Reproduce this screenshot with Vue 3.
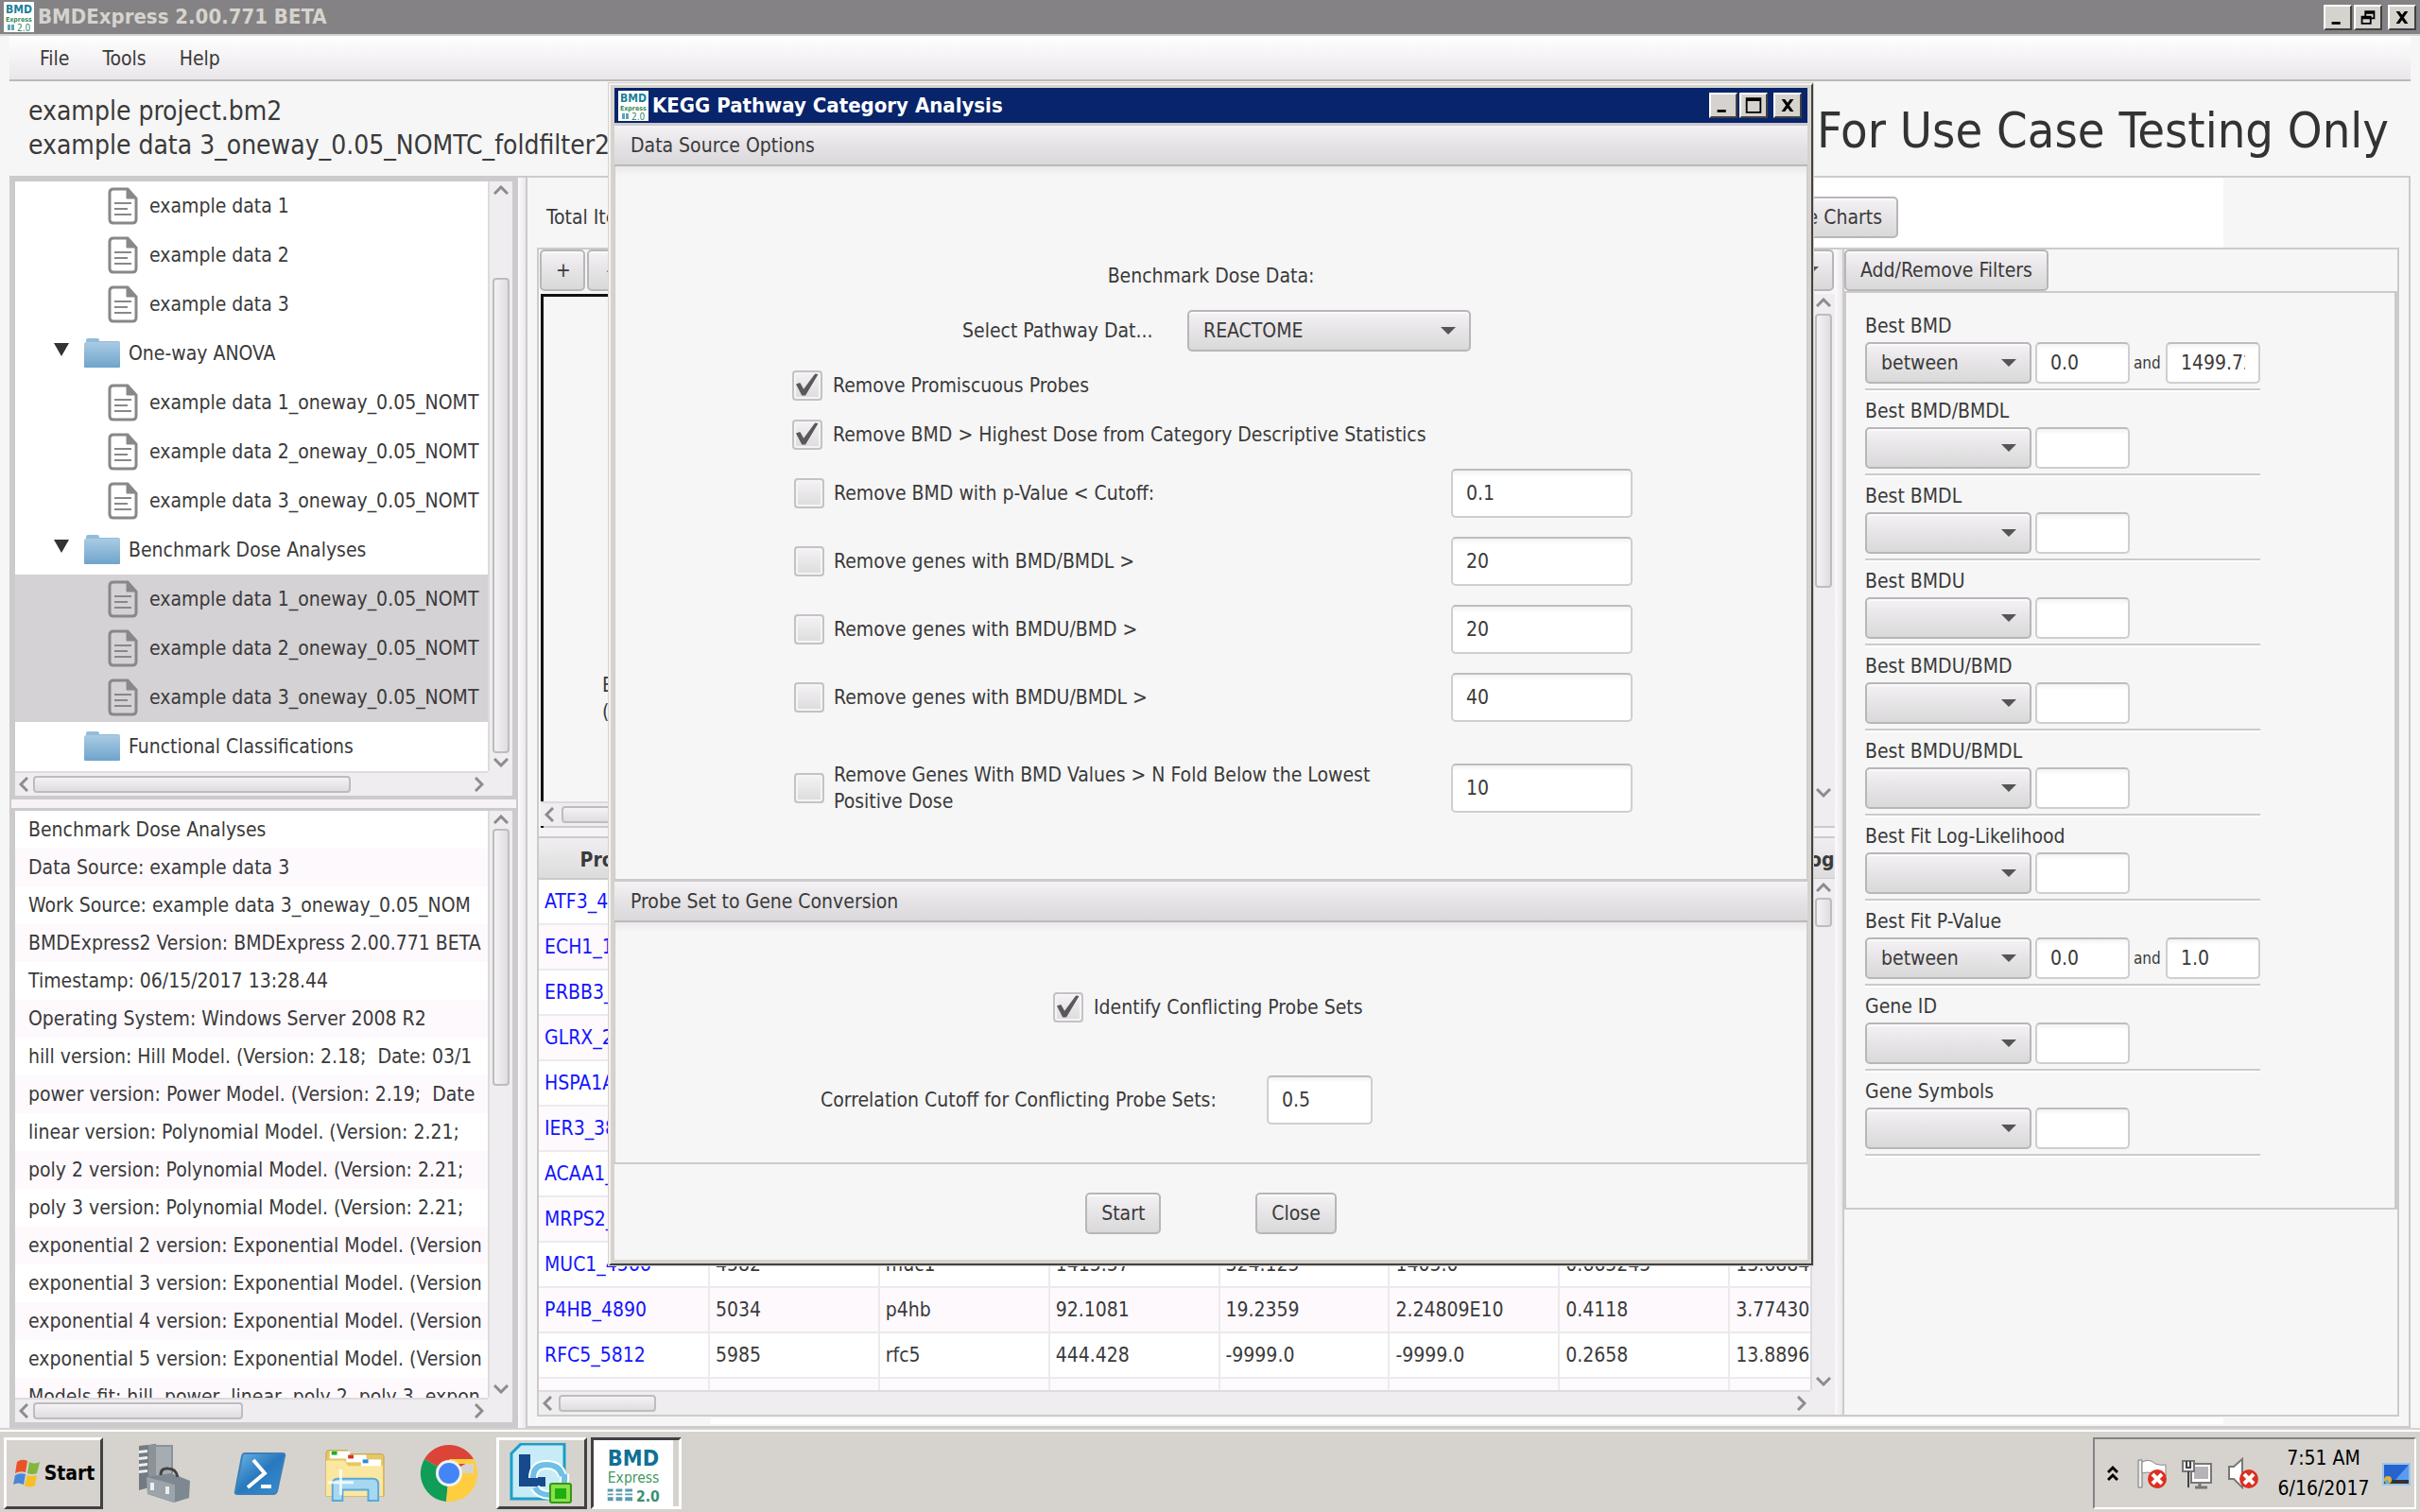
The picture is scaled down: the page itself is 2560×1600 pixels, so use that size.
<script setup>
const projectName = 'example project.bm2'
const dataName = 'example data 3_oneway_0.05_NOMTC_foldfilter2_'

const tree = [
  { kind: 'file', label: 'example data 1' },
  { kind: 'file', label: 'example data 2' },
  { kind: 'file', label: 'example data 3' },
  { kind: 'folder', label: 'One-way ANOVA', open: true },
  { kind: 'file', label: 'example data 1_oneway_0.05_NOMT' },
  { kind: 'file', label: 'example data 2_oneway_0.05_NOMT' },
  { kind: 'file', label: 'example data 3_oneway_0.05_NOMT' },
  { kind: 'folder', label: 'Benchmark Dose Analyses', open: true },
  { kind: 'file', label: 'example data 1_oneway_0.05_NOMT', selected: true },
  { kind: 'file', label: 'example data 2_oneway_0.05_NOMT', selected: true },
  { kind: 'file', label: 'example data 3_oneway_0.05_NOMT', selected: true },
  { kind: 'folder', label: 'Functional Classifications' },
]

const info = [
  'Benchmark Dose Analyses',
  'Data Source: example data 3',
  'Work Source: example data 3_oneway_0.05_NOM',
  'BMDExpress2 Version: BMDExpress 2.00.771 BETA',
  'Timestamp: 06/15/2017 13:28.44',
  'Operating System: Windows Server 2008 R2',
  'hill version: Hill Model. (Version: 2.18;  Date: 03/1',
  'power version: Power Model. (Version: 2.19;  Date',
  'linear version: Polynomial Model. (Version: 2.21;',
  'poly 2 version: Polynomial Model. (Version: 2.21;',
  'poly 3 version: Polynomial Model. (Version: 2.21;',
  'exponential 2 version: Exponential Model. (Version',
  'exponential 3 version: Exponential Model. (Version',
  'exponential 4 version: Exponential Model. (Version',
  'exponential 5 version: Exponential Model. (Version',
  'Models fit: hill, power, linear, poly 2, poly 3, expon',
]

const columns = ['Probe ID', 'Gene IDs', 'Gene Symbols', 'Best BMD', 'Best BMDL', 'Best BMDU', 'Best P-Value', 'Best Log Like']
const rows = [
  ['ATF3_467', '', '', '', '', '', '', ''],
  ['ECH1_1891', '', '', '', '', '', '', ''],
  ['ERBB3_2065', '', '', '', '', '', '', ''],
  ['GLRX_2745', '', '', '', '', '', '', ''],
  ['HSPA1A_33', '', '', '', '', '', '', ''],
  ['IER3_3870', '', '', '', '', '', '', ''],
  ['ACAA1_30', '', '', '', '', '', '', ''],
  ['MRPS2_516', '', '', '', '', '', '', ''],
  ['MUC1_4566', '4582', 'muc1', '1415.57', '324.125', '1405.0', '0.665245', '13.6884'],
  ['P4HB_4890', '5034', 'p4hb', '92.1081', '19.2359', '2.24809E10', '0.4118', '3.77430'],
  ['RFC5_5812', '5985', 'rfc5', '444.428', '-9999.0', '-9999.0', '0.2658', '13.8896'],
  ['', '', '', '', '', '', '', ''],
]

const filters = [
  { label: 'Best BMD', op: 'between', from: '0.0', to: '1499.72' },
  { label: 'Best BMD/BMDL' },
  { label: 'Best BMDL' },
  { label: 'Best BMDU' },
  { label: 'Best BMDU/BMD' },
  { label: 'Best BMDU/BMDL' },
  { label: 'Best Fit Log-Likelihood' },
  { label: 'Best Fit P-Value', op: 'between', from: '0.0', to: '1.0' },
  { label: 'Gene ID' },
  { label: 'Gene Symbols' },
]

const cutoffs = [
  { label: 'Remove BMD with p-Value < Cutoff:', value: '0.1' },
  { label: 'Remove genes with BMD/BMDL >', value: '20' },
  { label: 'Remove genes with BMDU/BMD >', value: '20' },
  { label: 'Remove genes with BMDU/BMDL >', value: '40' },
  { label: 'Remove Genes With BMD Values > N Fold Below the Lowest Positive Dose', value: '10', tall: true },
]

// Scroll thumb placement: space before, thumb and space after, as shares of the track.
const rowsOf = (a, b, c) => ({ gridTemplateRows: `${a}fr ${b}fr ${c}fr` })
const colsOf = (a, b, c) => ({ gridTemplateColumns: `${a}fr ${b}fr ${c}fr` })
</script>

<template>
  <div class="desktop">
    <header class="titlebar">
      <svg class="app-icon" viewBox="0 0 32 32"><rect width="32" height="32" fill="#fff" /><text x="2" y="12" font-size="12" font-weight="700" fill="#1a7f9c">BMD</text><text x="2" y="21" font-size="7" font-weight="700" fill="#3a8a5a">Express</text><path d="M4 24h3v6H4zM8 24h3v6H8z" fill="#5aa5b5" /><text x="14" y="31" font-size="10" fill="#2f8a6a">2.0</text></svg>
      <h1>BMDExpress 2.00.771 BETA</h1>
      <div class="win-buttons">
        <button aria-label="Minimize"><svg viewBox="0 0 24 20"><path d="M5 15h10v3H5z" /></svg></button>
        <button aria-label="Restore"><svg viewBox="0 0 24 20"><path d="M8 2h12v10h-4v6H4V8h4zM10 6v2h6v2h2V6zM6 12v4h8v-4z" fill-rule="evenodd" /></svg></button>
        <button class="apart" aria-label="Close"><svg viewBox="0 0 24 20"><path d="M5 3h4l3 4 3-4h4l-5 7 5 7h-4l-3-4-3 4H5l5-7z" /></svg></button>
      </div>
    </header>

    <nav class="menubar">
      <button>File</button>
      <button>Tools</button>
      <button>Help</button>
    </nav>

    <section class="heading">
      <div class="names">
        <p>{{ projectName }}</p>
        <p>{{ dataName }}</p>
      </div>
      <p class="notice">For Use Case Testing Only</p>
    </section>

    <main class="workspace">
      <aside class="left">
        <div class="pane tree">
          <ul class="scroll-body">
            <li v-for="(n, i) in tree" :key="i" :class="[n.kind, { selected: n.selected }]">
              <span class="arrow"><svg v-if="n.open" viewBox="0 0 16 14"><path d="M0 0h16L8 14z" fill="#333" /></svg></span>
              <svg v-if="n.kind === 'folder'" class="folder-icon" viewBox="0 0 40 32">
                <defs><linearGradient id="fold" x1="0" y1="0" x2="0" y2="1"><stop offset="0" stop-color="#a9cbe4" /><stop offset="1" stop-color="#6fa4cb" /></linearGradient></defs>
                <path d="M3 6V2q0-2 2-2h10q2 0 2 2v1h20q2 0 2 2v2z" fill="#94bcd9" />
                <path d="M1 6q0-2 2-2h34q2 0 2 2v24q0 1-1 1H2q-1 0-1-1z" fill="url(#fold)" />
              </svg>
              <svg v-else class="file-icon" viewBox="0 0 32 40"><path d="M6 2h15l9 10v22q0 4-4 4H6q-4 0-4-4V6q0-4 4-4z" fill="none" stroke="#888" stroke-width="3" /><path d="M20 2l10 10H20z" fill="#888" stroke="#888" /><path d="M7 17h18M7 23h14M7 29h18" stroke="#888" stroke-width="2" /></svg>
              <span class="text">{{ n.label }}</span>
            </li>
          </ul>
          <div class="vbar"><svg viewBox="0 0 16 10"><path d="M1 9l7-7 7 7" /></svg><div class="track" :style="rowsOf(83, 497, 1)"><i></i></div><svg viewBox="0 0 16 10"><path d="M1 1l7 7 7-7" /></svg></div>
          <div class="hbar"><svg viewBox="0 0 10 16"><path d="M9 1L2 8l7 7" /></svg><div class="track" :style="colsOf(1, 333, 126)"><i></i></div><svg viewBox="0 0 10 16"><path d="M1 1l7 7-7 7" /></svg></div>
          <div class="corner"></div>
        </div>
        <div class="split-h"></div>
        <div class="pane info">
          <ul class="scroll-body">
            <li v-for="(t, i) in info" :key="i">{{ t }}</li>
          </ul>
          <div class="vbar"><svg viewBox="0 0 16 10"><path d="M1 9l7-7 7 7" /></svg><div class="track" :style="rowsOf(1, 268, 308)"><i></i></div><svg viewBox="0 0 16 10"><path d="M1 1l7 7 7-7" /></svg></div>
          <div class="hbar"><svg viewBox="0 0 10 16"><path d="M9 1L2 8l7 7" /></svg><div class="track" :style="colsOf(1, 219, 238)"><i></i></div><svg viewBox="0 0 10 16"><path d="M1 1l7 7-7 7" /></svg></div>
          <div class="corner"></div>
        </div>
      </aside>

      <div class="split-v"></div>

      <section class="detail">
        <div class="topbar">
          <span class="total">Total Items</span>
          <div class="sheet"><button class="btn">Hide Charts</button></div>
        </div>

        <div class="columns">
          <div class="center">
            <div class="chart-tools">
              <button class="btn">+</button>
              <button class="btn">-</button>
              <span class="drop"><select class="btn" aria-label="Chart view"><option></option></select></span>
            </div>
            <div class="pane chart">
              <div class="scroll-body canvas"><p>BMD<br>(all)</p></div>
              <div class="vbar"><svg viewBox="0 0 16 10"><path d="M1 9l7-7 7 7" /></svg><div class="track" :style="rowsOf(3, 287, 206)"><i></i></div><svg viewBox="0 0 16 10"><path d="M1 1l7 7 7-7" /></svg></div>
              <div class="hbar"><svg viewBox="0 0 10 16"><path d="M9 1L2 8l7 7" /></svg><div class="track" :style="colsOf(4, 900, 390)"><i></i></div><svg viewBox="0 0 10 16"><path d="M1 1l7 7-7 7" /></svg></div>
              <div class="corner"></div>
            </div>
            <div class="split-h"></div>
            <div class="pane grid">
              <div class="scroll-body">
                <table>
                  <thead><tr><th v-for="c in columns" :key="c">{{ c }}</th></tr></thead>
                  <tbody>
                    <tr v-for="(r, i) in rows" :key="i">
                      <td v-for="(c, j) in r" :key="j"><a v-if="j === 0 && c" href="#">{{ c }}</a><template v-else>{{ c }}</template></td>
                    </tr>
                  </tbody>
                </table>
              </div>
              <div class="vbar"><svg viewBox="0 0 16 10"><path d="M1 9l7-7 7 7" /></svg><div class="track" :style="rowsOf(2, 31, 468)"><i></i></div><svg viewBox="0 0 16 10"><path d="M1 1l7 7 7-7" /></svg></div>
              <div class="hbar"><svg viewBox="0 0 10 16"><path d="M9 1L2 8l7 7" /></svg><div class="track" :style="colsOf(3, 102, 1196)"><i></i></div><svg viewBox="0 0 10 16"><path d="M1 1l7 7-7 7" /></svg></div>
              <div class="corner"></div>
            </div>
          </div>

          <div class="split-v"></div>

          <aside class="filters">
            <button class="btn">Add/Remove Filters</button>
            <div class="filter-list">
              <div v-for="(f, i) in filters" :key="f.label" class="filter">
                <label :for="'f' + i">{{ f.label }}</label>
                <div class="controls">
                  <span class="drop"><select :id="'f' + i" class="btn"><option>{{ f.op }}</option></select></span>
                  <input type="text" :value="f.from" :aria-label="f.label + ' value'">
                  <template v-if="f.to"><small>and</small><input type="text" :value="f.to" :aria-label="f.label + ' upper value'"></template>
                </div>
              </div>
            </div>
          </aside>
        </div>
        <div class="strip"></div>
      </section>
    </main>

    <footer class="taskbar">
      <button class="task start">
        <svg viewBox="0 0 32 30"><path d="M5 3q5-4 11-1l-2 12q-6-2-11 1z" fill="#e8532a" /><path d="M18 3q5 3 11 0l-3 12q-5 2-10 0z" fill="#7fb83a" /><path d="M3 17q5-3 11-1l-2 11q-6-3-11 0z" fill="#4a86d8" /><path d="M16 17q5 2 10 0l-2 11q-6 3-11 0z" fill="#f6bf26" /></svg>
        <b>Start</b>
      </button>
      <a class="pin" href="#" aria-label="Server Manager"><svg viewBox="0 0 60 64"><path d="M2 3l18-2v44l-18 5z" fill="#737b82" /><path d="M12 2h26v42H12z" fill="#8b9399" /><path d="M20 4h16v38H20z" fill="#a5adb2" /><path d="M2 8l9-1v3l-9 1zM2 15l9-1v3l-9 1zM2 22l9-1v3l-9 1zM2 29l9-1v3l-9 1z" fill="#eee" /><path d="M10 36l26-4 20 8-1 18-16 5-28-9z" fill="#7e8890" /><path d="M10 36l30 8v19l-29-9z" fill="#9aa4aa" /><path d="M25 34q0-8 8-7 8 0 10 9" fill="none" stroke="#444" stroke-width="3" /><path d="M16 42v8M32 46v8" stroke="#eee" stroke-width="4" /></svg></a>
      <a class="pin" href="#" aria-label="PowerShell"><svg viewBox="0 0 60 64"><defs><linearGradient id="ps" x1="0" y1="0" x2="1" y2="1"><stop offset="0" stop-color="#6db6e8" /><stop offset=".5" stop-color="#2878bd" /><stop offset="1" stop-color="#3b8fd0" /></linearGradient></defs><path d="M14 11h40q3 0 2 3l-8 37q-1 3-4 3H6q-3 0-2-3l7-37q1-3 3-3z" fill="url(#ps)" stroke="#3d80b8" stroke-width="2" /><path d="M23 18l12 14-18 15M31 46h11" fill="none" stroke="#fff" stroke-width="4" /></svg></a>
      <a class="pin" href="#" aria-label="Explorer"><svg viewBox="0 0 66 64"><path d="M2 10q0-3 3-3h20l3 4h34q3 0 3 3v43H2z" fill="#e5c765" stroke="#c5a245" /><path d="M6 8h22v8H6z" fill="#fff" /><path d="M8 8h6v4H8z" fill="#1fb01f" /><path d="M24 12h22v8H24z" fill="#fff" /><path d="M26 12h6v4h-6z" fill="#d83020" /><path d="M40 17h22v8H40z" fill="#fff" /><path d="M42 17h6v4h-6z" fill="#2a8ae0" /><path d="M2 18h20l4 6h38v33H2z" fill="#fbe8a0" /><path d="M9 62V44q0-6 6-6h38q6 0 6 6v18H48V50H20v12z" fill="#a6d8f2" stroke="#5aa8d8" stroke-width="2" /><path d="M18 28v28M4 42h28" stroke="#fff" stroke-width="3" opacity=".8" /></svg></a>
      <a class="pin" href="#" aria-label="Chrome"><svg viewBox="0 0 64 64"><path d="M32 32L6 17A30 30 0 0158 17z" fill="#db4437" /><path d="M32 32L6 17a30 30 0 0023 45z" fill="#0f9d58" /><path d="M32 32h26V17A30 30 0 0129 62z" fill="#ffcd40" /><path d="M32 17h26a30 30 0 012 5H34z" fill="#ffcd40" /><circle cx="32" cy="32" r="14" fill="#f1f1f1" /><circle cx="32" cy="32" r="11" fill="#4285f4" /></svg></a>
      <button class="task app" aria-label="Lync"><svg viewBox="0 0 68 64"><path d="M12 1h46v58H2V11z" fill="#c8ecf7" stroke="#18a0c8" stroke-width="3" /><path d="M10 12h12v24h16v10H10z" fill="#174a8c" /><path d="M25 37q0-14 14-14 14 0 17 12M58 33q2 20-15 22-12 0-16-8" fill="none" stroke="#fff" stroke-width="10" /><path d="M25 37q0-14 14-14 14 0 17 12M58 33q2 20-15 22-12 0-16-8" fill="none" stroke="#6fc0e6" stroke-width="6" /><rect x="43" y="43" width="22" height="20" rx="2" fill="#8be04a" stroke="#2f9a14" stroke-width="2" /><rect x="48" y="48" width="12" height="11" fill="#1fae10" /></svg></button>
      <button class="task pressed" aria-label="BMDExpress"><svg viewBox="0 0 84 72"><text x="14" y="28" font-size="24" font-weight="700" fill="#0f7094">BMD</text><text x="14" y="46" font-size="16" fill="#3f9a60">Express</text><path d="M14 53h6v13h-6zM23 53h7v13h-7zM33 53h8v13h-8z" fill="#5a9ab0" /><path d="M14 57h27M14 61h27" stroke="#fff" stroke-width="2" /><text x="45" y="67" font-size="16" font-weight="700" fill="#3a8f70">2.0</text></svg></button>
      <div class="tray">
        <svg class="more" viewBox="0 0 12 18"><path d="M1 8l5-5 5 5M1 16l5-5 5 5" /></svg>
        <svg class="tray-icon" viewBox="0 0 34 34"><path d="M3 3h4v29H3z" fill="#eee" stroke="#777" /><path d="M7 5q8-4 14 2 5 2 11 1v12q-10 1-14-3-6-2-11 0z" fill="#fff" stroke="#888" /><circle cx="23" cy="23" r="10" fill="#dc3020" /><path d="M18 18l10 10M28 18L18 28" stroke="#fff" stroke-width="4" /></svg>
        <svg class="tray-icon" viewBox="0 0 34 34"><path d="M11 7h21v20H11z" fill="#fff" stroke="#777" stroke-width="2" /><path d="M14 10h15v13H14z" fill="#b5b2b8" /><path d="M15 32h13M20 28v4" stroke="#777" stroke-width="3" /><path d="M2 4h12v11H2z" fill="#eee" stroke="#777" stroke-width="2" /><path d="M6 4v7h4V4M8 15v17" fill="none" stroke="#444" stroke-width="2" /></svg>
        <svg class="tray-icon" viewBox="0 0 34 34"><path d="M3 10h5l9-8v30l-9-9H3z" fill="#fff" stroke="#777" stroke-width="2" /><circle cx="24" cy="23" r="10" fill="#dc3020" /><path d="M19 18l10 10M29 18L19 28" stroke="#fff" stroke-width="4" /></svg>
        <p class="clock">7:51 AM<br>6/16/2017</p>
        <svg class="tray-icon" viewBox="0 0 34 34"><path d="M2 6h30v24H2z" fill="#9cc4ec" /><path d="M4 8h26v16H4z" fill="#2464cc" /><path d="M16 24L30 8v16z" fill="#5a9cf0" /><path d="M4 24h26v4H4z" fill="#333" /><circle cx="8" cy="24" r="4" fill="#e8b030" /><circle cx="7" cy="26" r="2" fill="#40b8e8" /></svg>
      </div>
    </footer>

    <div class="overlay">
      <section class="dialog" role="dialog" aria-labelledby="dlg-title">
        <header class="dialog-title">
          <svg class="app-icon" viewBox="0 0 32 32"><rect width="32" height="32" fill="#fff" /><text x="2" y="12" font-size="12" font-weight="700" fill="#1a7f9c">BMD</text><text x="2" y="21" font-size="7" font-weight="700" fill="#3a8a5a">Express</text><path d="M4 24h3v6H4zM8 24h3v6H8z" fill="#5aa5b5" /><text x="14" y="31" font-size="10" fill="#2f8a6a">2.0</text></svg>
          <h2 id="dlg-title">KEGG Pathway Category Analysis</h2>
          <div class="win-buttons">
            <button aria-label="Minimize"><svg viewBox="0 0 24 20"><path d="M5 15h10v3H5z" /></svg></button>
            <button aria-label="Maximize"><svg viewBox="0 0 24 20"><path d="M3 1h18v18H3zM5 5v12h14V5z" fill-rule="evenodd" /></svg></button>
            <button class="apart" aria-label="Close"><svg viewBox="0 0 24 20"><path d="M5 3h4l3 4 3-4h4l-5 7 5 7h-4l-3-4-3 4H5l5-7z" /></svg></button>
          </div>
        </header>

        <h3>Data Source Options</h3>
        <div class="group source">
          <p class="caption">Benchmark Dose Data:</p>
          <div class="pathway">
            <label for="pathway">Select Pathway Dat...</label>
            <span class="drop"><select id="pathway" class="btn"><option>REACTOME</option></select></span>
          </div>
          <div class="checks">
            <label class="check"><input type="checkbox" checked>Remove Promiscuous Probes</label>
            <label class="check"><input type="checkbox" checked>Remove BMD &gt; Highest Dose from Category Descriptive Statistics</label>
          </div>
          <div class="cutoffs">
            <div v-for="c in cutoffs" :key="c.label" class="cutoff" :class="{ tall: c.tall }">
              <label class="check"><input type="checkbox"><span>{{ c.label }}</span></label>
              <input type="text" :value="c.value" :aria-label="c.label">
            </div>
          </div>
        </div>

        <h3>Probe Set to Gene Conversion</h3>
        <div class="group conversion">
          <label class="check"><input type="checkbox" checked>Identify Conflicting Probe Sets</label>
          <div class="correlation">
            <label for="corr">Correlation Cutoff for Conflicting Probe Sets:</label>
            <input id="corr" type="text" value="0.5">
          </div>
        </div>

        <div class="actions">
          <button class="btn">Start</button>
          <button class="btn">Close</button>
        </div>
      </section>
    </div>
  </div>
</template>

<style>
body {
  margin: 0;
  background: #f6f6f6;
}
</style>

<style scoped>
.desktop {
  --line: #cccacc;
  --edge: #b8b6b8;
  position: relative;
  display: flex;
  flex-direction: column;
  height: 100vh;
  overflow: hidden;
  background: #f6f6f6;
  color: #3a3a3a;
  font: 21px/28px "DejaVu Sans Condensed", "Noto Sans", sans-serif;
}
.desktop *,
.desktop *::before,
.desktop *::after {
  box-sizing: border-box;
}
h1, h2, h3, p, ul {
  margin: 0;
  padding: 0;
  list-style: none;
}
button, input, select {
  margin: 0;
  font: inherit;
  color: inherit;
}
svg {
  display: block;
  flex: none;
}

/* Classic window chrome */
.titlebar {
  display: flex;
  align-items: center;
  gap: 4px;
  flex: none;
  height: 38px;
  padding: 0 4px;
  border-bottom: 2px solid #d6d3ce;
  background: #848284;
  color: #d6d3ce;
}
.titlebar h1,
.dialog-title h2 {
  flex: 1;
  font-size: 22px;
  line-height: 28px;
  white-space: nowrap;
}
.app-icon {
  width: 32px;
  height: 32px;
}
.win-buttons {
  display: flex;
  gap: 2px;
}
.win-buttons button {
  width: 30px;
  height: 27px;
  padding: 2px;
  border: 2px solid;
  border-color: #fff #424142 #424142 #fff;
  background: #d6d3ce;
}
.win-buttons svg {
  width: 22px;
  height: 19px;
}
.win-buttons .apart {
  margin-left: 4px;
}

.menubar {
  display: flex;
  gap: 35px;
  flex: none;
  height: 48px;
  margin: 0 10px;
  padding: 2px 32px 0;
  border-bottom: 2px solid #bbb9bb;
  background: linear-gradient(#fff, #f6f4f6 45%, #e8e6e8);
}
.menubar button {
  padding: 0;
  border: 0;
  background: none;
}

.heading {
  display: flex;
  justify-content: space-between;
  align-items: center;
  flex: none;
  height: 100px;
  padding: 4px 33px 0 30px;
}
.names {
  font-size: 28px;
  line-height: 36px;
  padding-bottom: 4px;
}
.notice {
  color: #333;
  font-size: 52px;
  line-height: 60px;
}

.workspace {
  display: flex;
  flex: 1;
  min-height: 0;
  margin: 0 10px;
  border-top: 2px solid var(--line);
}
.left {
  display: flex;
  flex-direction: column;
  flex: none;
  width: 538px;
  background: var(--line);
  padding: 4px 6px 6px;
}

/* A pane holds content, a right and a bottom scroll bar */
.pane {
  display: grid;
  grid-template: minmax(0, 1fr) 26px / minmax(0, 1fr) 26px;
}
.scroll-body {
  overflow: hidden;
}
.vbar, .hbar {
  display: flex;
  align-items: center;
  background: #efedef;
}
.vbar {
  flex-direction: column;
  padding: 4px 0;
  border-left: 2px solid #dddbdd;
}
.hbar {
  padding: 0 4px;
  border-top: 2px solid #dddbdd;
}
.vbar svg, .hbar svg {
  width: 16px;
  height: 10px;
  fill: none;
  stroke: #8c8c8c;
  stroke-width: 3;
}
.hbar svg {
  width: 10px;
  height: 16px;
}
.track {
  display: grid;
  flex: 1;
  min-height: 0;
}
.vbar .track {
  width: 18px;
  margin: 4px 0;
}
.hbar .track {
  height: 18px;
  margin: 0 4px;
}
.track i {
  border: 2px solid #bebcbe;
  border-radius: 4px;
  background: #ebe9eb;
}
.vbar i {
  grid-row: 2;
  background: linear-gradient(90deg, #f4f2f4, #dfdddf);
}
.hbar i {
  grid-column: 2;
  background: linear-gradient(#f4f2f4, #dfdddf);
}
.corner {
  background: #efedef;
}

.split-h {
  flex: none;
  height: 9px;
  background: #f6f2f6;
}
.left .split-h {
  margin: 4px -4px 3px;
}
.split-v {
  flex: none;
  width: 10px;
  border-right: 2px solid var(--line);
  background: linear-gradient(90deg, #fdf9fd, #ebe8eb);
}

.tree {
  flex: none;
  height: 650px;
}
.tree ul, .info ul {
  background: #fff;
  white-space: pre;
}
.tree li {
  display: flex;
  align-items: center;
  height: 52px;
}
.tree .selected {
  background: #d4d2d4;
}
.arrow {
  flex: none;
  width: 72px;
  padding: 0 0 8px 41px;
}
.file .arrow {
  width: 98px;
}
.arrow svg {
  width: 16px;
  height: 14px;
}
.folder-icon {
  width: 40px;
  height: 32px;
  margin-right: 8px;
}
.file-icon {
  width: 32px;
  height: 40px;
  margin-right: 12px;
}
.info {
  flex: 1;
  min-height: 0;
}
.info li {
  height: 40px;
  padding: 6px 14px;
}
.info li:nth-child(even) {
  background: #fdf9fd;
}

.detail {
  display: flex;
  flex-direction: column;
  flex: 1;
  min-width: 0;
  border-right: 2px solid var(--line);
  border-bottom: 2px solid var(--line);
}
.topbar {
  display: flex;
  flex: none;
  height: 74px;
  padding-right: 196px;
}
.total {
  width: 194px;
  padding: 28px 20px;
  white-space: nowrap;
}
.sheet {
  display: flex;
  justify-content: flex-end;
  align-items: center;
  flex: 1;
  padding: 10px 344px 0 0;
  background: #fff;
}
.strip {
  flex: none;
  height: 6px;
  margin: 2px 196px 2px 194px;
  background: #fff;
}
.columns {
  display: flex;
  flex: 1;
  min-height: 0;
  margin: 0 10px;
  border: 2px solid var(--line);
}

/* Push buttons and drop-downs */
.btn {
  height: 44px;
  padding: 0 15px;
  border: 2px solid var(--edge);
  border-radius: 5px;
  background: linear-gradient(#f4f2f4, #e6e4e6 50%, #dad9da);
  box-shadow: inset 0 2px #fbf9fb;
  white-space: nowrap;
}
.drop {
  position: relative;
  display: inline-block;
}
.drop select {
  width: 100%;
  appearance: none;
}
.drop::after {
  content: "";
  position: absolute;
  top: 18px;
  right: 16px;
  border: 8px solid transparent;
  border-top-color: #555;
  border-bottom: 0;
  pointer-events: none;
}
input[type="text"] {
  height: 44px;
  padding: 0 14px;
  border: 2px solid #d0ced0;
  border-top-color: #bebcbe;
  border-radius: 5px;
  background: linear-gradient(#f4f2f4, #fff 6px);
}

.center {
  display: flex;
  flex-direction: column;
  flex: 1;
  min-width: 0;
}
.chart-tools {
  display: flex;
  gap: 2px;
  flex: none;
  height: 47px;
  padding: 0 1px;
}
.chart-tools .btn {
  width: 48px;
}
.chart-tools .drop {
  width: 180px;
  margin-left: auto;
}
.chart-tools .drop .btn {
  width: 100%;
}
.chart {
  flex: none;
  height: 565px;
  margin-left: 2px;
  border-bottom: 2px solid var(--line);
}
.canvas {
  border: solid #111;
  border-width: 3px 0 0 3px;
  padding: 397px 62px;
}
.center .split-h {
  height: 11px;
  border-bottom: 2px solid var(--line);
}
.grid {
  flex: 1;
  min-height: 0;
  grid-template-rows: 43px minmax(0, 1fr) 26px;
}
.grid .scroll-body {
  grid-row: 1 / 3;
  grid-column: 1 / 3;
}
.grid .vbar {
  grid-row: 2;
  grid-column: 2;
}
table {
  width: 1440px;
  border-collapse: collapse;
  table-layout: fixed;
  background: #fff;
}
th {
  height: 43px;
  padding: 3px 0 0;
  border-right: 2px solid var(--line);
  border-bottom: 2px solid var(--line);
  background: linear-gradient(#f0eef0, #dddcdd);
  white-space: nowrap;
}
td {
  height: 48px;
  padding: 0 6px;
  border-right: 2px solid #eceaec;
  border-bottom: 2px solid #eceaec;
  white-space: nowrap;
}
tbody tr:nth-child(even) {
  background: #fdf9fd;
}
td a {
  color: #1414ff;
  text-decoration: none;
}

.filters {
  flex: none;
  width: 585px;
}
.filters > .btn {
  display: block;
}
.filter-list {
  height: 972px;
  padding: 22px 22px 0 20px;
  border: solid var(--line);
  border-width: 2px 3px 2px 2px;
}
.filter {
  width: 418px;
  height: 90px;
}
.filter label {
  display: block;
  height: 30px;
  line-height: 26px;
}
.controls {
  display: flex;
  align-items: center;
  gap: 4px;
  height: 51px;
  padding-bottom: 5px;
  border-bottom: 2px solid var(--line);
  box-shadow: 0 2px #fff;
}
.controls .drop {
  width: 176px;
}
.controls input {
  width: 100px;
}
.controls small {
  width: 30px;
  font-size: 17px;
}

/* Task bar */
.taskbar {
  display: flex;
  align-items: center;
  flex: none;
  height: 89px;
  padding: 4px 4px 0;
  border-top: 2px solid #d6d3ce;
  background: #d6d3ce;
  box-shadow: inset 0 2px #fff;
  color: #000;
}
.task {
  display: flex;
  align-items: center;
  justify-content: center;
  height: 76px;
  padding: 0;
  border: 3px solid;
  border-color: #fff #424142 #424142 #fff;
  background: #d6d3ce;
}
.start {
  width: 105px;
  margin-right: 16px;
  gap: 2px;
}
.start svg {
  width: 32px;
  height: 40px;
}
.pin {
  display: flex;
  justify-content: center;
  width: 100px;
}
.pin svg {
  width: 64px;
  height: 64px;
}
.app {
  width: 96px;
}
.app svg {
  width: 68px;
  height: 64px;
}
.pressed {
  width: 96px;
  margin-left: 4px;
  border-color: #424142 #fff #fff #424142;
  justify-content: flex-start;
}
.pressed svg {
  width: 84px;
  height: 70px;
  background: #fff;
}
.tray {
  display: flex;
  align-items: center;
  gap: 14px;
  height: 76px;
  margin-left: auto;
  padding: 0 2px 0 13px;
  border: 2px solid;
  border-color: #848284 #fff #fff #848284;
}
.tray-icon {
  width: 34px;
  height: 34px;
}
.more {
  width: 12px;
  height: 18px;
  margin-right: 4px;
  fill: none;
  stroke: #000;
  stroke-width: 3;
}
.clock {
  width: 110px;
  margin-right: -9px;
  line-height: 32px;
  text-align: center;
}

/* Dialog */
.overlay {
  position: absolute;
  inset: 87px 0 auto;
  display: flex;
  justify-content: center;
  padding-left: 2px;
  pointer-events: none;
}
.dialog {
  width: 1276px;
  padding: 3px 4px 5px 4px;
  border: 3px solid;
  border-color: #f4f2ee #424142 #424142 #f4f2ee;
  outline: 1px solid #d6d3ce;
  outline-offset: -1px;
  background: #f6f6f6;
  box-shadow: inset 0 0 0 4px #d6d3ce;
  pointer-events: auto;
}
.dialog-title {
  display: flex;
  align-items: center;
  gap: 4px;
  height: 37px;
  padding: 0 6px 0 4px;
  background: #08246b;
  color: #fff;
}
.dialog h3 {
  height: 46px;
  padding: 8px 17px;
  border-top: 3px solid var(--line);
  border-bottom: 2px solid #bbb9bb;
  background: linear-gradient(#f4f2f4, #e6e3e6 50%, #dad9da);
  font-size: 21px;
  font-weight: 400;
  line-height: 26px;
}
.group {
  border: solid var(--line);
  border-width: 0 1px;
  background: linear-gradient(#ebe9eb, #f6f6f6 10px);
}
.source {
  height: 754px;
  padding-top: 102px;
}
.caption {
  text-align: center;
}
.pathway {
  display: flex;
  align-items: center;
  height: 44px;
  margin: 22px 0 10px 367px;
}
.pathway label {
  width: 238px;
}
.pathway .drop {
  width: 300px;
}
.checks {
  margin-left: 187px;
}
.check {
  display: flex;
  align-items: center;
  gap: 11px;
}
.checks .check {
  height: 52px;
  white-space: nowrap;
}
input[type="checkbox"] {
  flex: none;
  width: 32px;
  height: 32px;
  border: 2px solid #c4c2c4;
  border-radius: 4px;
  background: linear-gradient(#f4f2f4, #dddcdd);
  box-shadow: inset 0 0 0 2px #f6f4f6;
  appearance: none;
}
input[type="checkbox"]:checked::before {
  content: "";
  display: block;
  width: 24px;
  height: 24px;
  margin: 1px 2px;
  background: #5a585a;
  clip-path: polygon(0 48%, 18% 42%, 34% 70%, 84% 2%, 98% 4%, 42% 98%, 26% 98%);
}
.cutoffs {
  margin: 0 184px 0 189px;
}
.cutoff {
  display: flex;
  align-items: center;
  justify-content: space-between;
  height: 72px;
}
.cutoff .check {
  gap: 10px;
  width: 650px;
}
.cutoff input[type="text"] {
  width: 192px;
  height: 52px;
}
.cutoff.tall {
  height: 120px;
}
.conversion {
  height: 256px;
  padding-top: 74px;
  border-bottom: 2px solid var(--line);
}
.conversion > .check {
  margin-left: 463px;
}
.correlation {
  display: flex;
  align-items: center;
  height: 52px;
  margin: 56px 0 0 217px;
}
.correlation label {
  width: 472px;
}
.correlation input {
  width: 112px;
  height: 52px;
}
.actions {
  display: flex;
  justify-content: center;
  gap: 100px;
  padding: 30px 0 26px;
}
</style>
